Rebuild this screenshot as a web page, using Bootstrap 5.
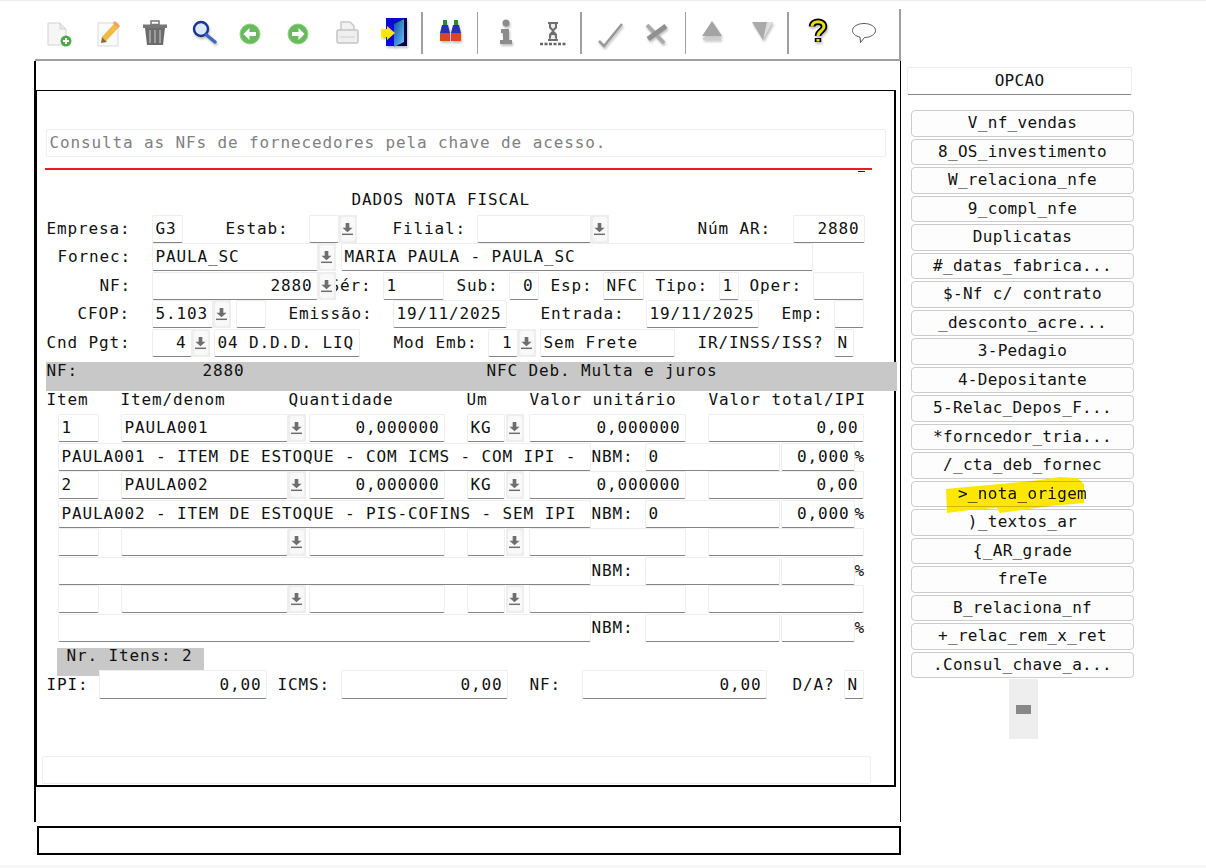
<!DOCTYPE html>
<html lang="pt-BR">
<head>
    <meta charset="UTF-8">
    <meta name="viewport" content="width=device-width, initial-scale=1.0">
    <title>Dados Nota Fiscal</title>
    <link href="https://cdn.jsdelivr.net/npm/bootstrap@5.3.0/dist/css/bootstrap.min.css" rel="stylesheet">
    <style>
        html, body { height: 868px; overflow: hidden; }
        body { background: #fff; border-top: 1px solid #eee; color: #111; font-family: "DejaVu Sans Mono", "Liberation Mono", monospace; font-size: 16px; letter-spacing: .87px; }

        /* toolbar */
        .main-col { width: 867px; margin-left: 34px; flex: none; }
        .tool-bar { height: 52px; width: 866px; margin: 8px 0 0 1px; border-right: 2px solid #a0a0a0; border-bottom: 2px solid #a0a0a0; }
        .tb-ic { width: 32px; height: 50px; flex: none; filter: blur(.6px); }
        .tb-ic.shd { filter: blur(.7px) drop-shadow(1px 2px 1px #8888); }
        .tb-sep { width: 1px; height: 42px; margin-top: 3px; background: #a0a0a0; flex: none; }
        .tb-sep.thick { width: 2px; }

        /* frames */
        .outer-box { height: 761px; padding-top: 29px; border-left: 2px solid #000; border-right: 1.5px solid #000; }
        .form-frame { width: 860px; height: 697px; padding: 0 0 0 8.5px; border: solid #000; border-width: 1px 2px 2px 1.5px; }
        .cmd-box { width: 864px; height: 29px; margin: 4px 0 0 3px; border: 2px solid #000; }
        .foot-band { height: 3px; margin-top: 10px; background: #f6f6f6; }

        /* form */
        .msg-field { width: 840px; height: 28px; margin-top: 38px; padding-left: 3px; line-height: 26px; color: #808080; border: 1px solid #eee; border-radius: 2px; }
        .red-line { width: 827px; height: 2px; margin: 11px 0 0 -1px; background: #ed1c24; }
        .tiny-dash { width: 7px; height: 1px; margin: 1px 0 0 812px; background: #222; }
        .form-title { height: 28.5px; margin-top: 14px; padding-left: 306px; line-height: 28px; }
        .f-row { height: 28.5px; display: flex; white-space: nowrap; }
        .lb { flex: none; height: 28px; line-height: 28px; white-space: pre; }
        .fd { flex: none; height: 28px; padding: 0 3px; line-height: 26px; background: #fff; border: 1px solid #eee; border-bottom-color: #858585; border-radius: 2px; overflow: hidden; }
        .fd.num { text-align: right; padding-right: 4px; }
        .dd { position: relative; z-index: 1; flex: none; width: 18px; height: 28px; padding: 2px; background: #eee; }
        .dd span { display: flex; align-items: center; justify-content: center; height: 24px; background: #f9f9f9; border-radius: 3px; }
        .dd svg { width: 11px; height: 14px; fill: #6e6e6e; }
        .gray-band { width: 851px; height: 29px; margin-top: 5px; background: #c8c8c8; line-height: 18px; display: flex; white-space: pre; }
        .hdr-row { height: 23px; display: flex; line-height: 17px; }
        .nr-band { position: relative; width: 147px; height: 22px; margin: 6px 0 0 11px; padding-left: 10px; line-height: 16px; background: #c8c8c8; }
        .nr-band::after { content: ""; position: absolute; top: 22px; left: 0; width: 42px; height: 6px; background: #c8c8c8; }
        .totals .lb { height: 29px; line-height: 29px; }
        .totals .fd { height: 29px; line-height: 27px; }
        .status-field { width: 829px; height: 28px; margin: 57px 0 0 -4px; border: 1px solid #eee; border-radius: 2px; }

        /* side */
        .side-col { margin: 66px 0 0 6px; width: 229px; flex: none; letter-spacing: .3px; }
        .opc-head { width: 225px; height: 28px; margin-bottom: 15px; line-height: 26px; text-align: center; border: 1px solid #eee; border-bottom-color: #858585; border-radius: 2px; }
        .opc-list { width: 223px; margin-left: 4px; display: grid; gap: 2px; }
        .opc-btn { position: relative; height: 26.5px; padding: 0; font: inherit; letter-spacing: inherit; line-height: 24px; color: #111; background: #fdfdfd; border: 1px solid #ccc; border-radius: 4px; }
        .opc-btn.marked { z-index: 2; }
        .hl-mark { position: absolute; left: 33px; top: -6px; width: 140px; height: 37px; fill: #ffe800; mix-blend-mode: multiply; }
        .scroll-stub { width: 29px; height: 60px; margin: 1px 0 0 102px; padding: 26px 7px 0; background: #eee; }
        .scroll-stub div { height: 9px; background: #888; }

        .w18{width:18px}.w20{width:20px}.w30{width:30px}.w31{width:31px}.w38{width:38px}.w40{width:40px}.w41{width:41px}.w51{width:51px}.w53{width:53px}.w54{width:54px}.w61{width:61px}.w63{width:63px}.w64{width:64px}.w65{width:65px}.w72{width:72px}.w74{width:74px}.w75{width:75px}.w77{width:77px}.w106{width:106px}.w113{width:113px}.w114{width:114px}.w120{width:120px}.w126{width:126px}.w127{width:127px}.w128{width:128px}.w135{width:135px}.w136{width:136px}.w139{width:139px}.w146{width:146px}.w156{width:156px}.w157{width:157px}.w159{width:159px}.w166{width:166px}.w167{width:167px}.w168{width:168px}.w178{width:178px}.w179{width:179px}.w184{width:184px}.w185{width:185px}.w284{width:284px}.w472{width:472px}.w533{width:533px}
        .pl1{padding-left:1px}.pl11{padding-left:11px}.pl12{padding-left:12px}.pl13{padding-left:13px}.pl22{padding-left:22px}.pl23{padding-left:23px}.pl26{padding-left:26px}.pl32{padding-left:32px}.pl34{padding-left:34px}.pl36{padding-left:36px}.pl43{padding-left:43px}.pl54{padding-left:54px}.pl89{padding-left:89px}
        .ml1{margin-left:1px}.ml3{margin-left:3px}.ml4{margin-left:4px}.ml5{margin-left:5px}.ml7{margin-left:7px}.ml9{margin-left:9px}.ml10{margin-left:10px}.ml11{margin-left:11px}.ml12{margin-left:12px}.ml13{margin-left:13px}.ml14{margin-left:14px}.ml15{margin-left:15px}.ml16{margin-left:16px}.ml17{margin-left:17px}.ml18{margin-left:18px}.ml22{margin-left:22px}.mln6{margin-left:-6px}
    </style>
</head>
<body>
    <svg width="0" height="0" class="position-absolute">
        <symbol id="dd-arrow" viewBox="0 0 12 15"><path d="M4 1h4v5h3.5L6 11 .5 6H4z"/><rect x="0" y="12.5" width="12" height="1.6"/></symbol>
    </svg>

    <div class="d-flex">
        <div class="main-col">
            <!-- barra de ferramentas -->
            <div class="tool-bar d-flex">
                <svg class="tb-ic ml7" viewBox="0 0 32 50"><path d="M6 14h12l6 6v16H6z" fill="#f6f6f6" stroke="#d2d2d2"/><path d="M18 14v6h6" fill="#e8e8e8" stroke="#d2d2d2"/><circle cx="24" cy="32" r="5.5" fill="#4fa84a"/><path d="M24 29v6M21 32h6" stroke="#fff" stroke-width="2"/></svg>
                <svg class="tb-ic ml18" viewBox="0 0 32 50"><rect x="6" y="14" width="20" height="23" fill="#fafafa" stroke="#dadada"/><path d="M12 30 25 16" stroke="#f2bb45" stroke-width="6"/><path d="M22 13l5 5" stroke="#f0a060" stroke-width="3"/><path d="M9 34l1-6 5 5z" fill="#8a6a3a"/></svg>
                <svg class="tb-ic ml15" viewBox="0 0 32 50"><rect x="12" y="12" width="8" height="3.5" fill="none" stroke="#777" stroke-width="1.5"/><rect x="4" y="15.5" width="24" height="3.5" fill="#777"/><path d="M6 19h20l-2 17H8z" fill="#6c6c6c"/><path d="M11 21v13M16 21v13M21 21v13" stroke="#aaa" stroke-width="1.6"/></svg>
                <svg class="tb-ic shd ml17" viewBox="0 0 32 50"><circle cx="13" cy="20" r="7" fill="#dce8fc" stroke="#1a3590" stroke-width="2.4"/><path d="M18.500 26 27 33" stroke="#3f68c4" stroke-width="3.500" stroke-linecap="round"/></svg>
                <svg class="tb-ic ml14" viewBox="0 0 32 50"><circle cx="16" cy="25" r="10" fill="#68bb5c" stroke="#8fd080"/><path d="M9.500 25l6-6v4h6.500v4H15.500v4z" fill="#fff"/></svg>
                <svg class="tb-ic ml16" viewBox="0 0 32 50"><circle cx="16" cy="25" r="10" fill="#68bb5c" stroke="#8fd080"/><path d="M22.500 25l-6-6v4H10v4h6.500v4z" fill="#fff"/></svg>
                <svg class="tb-ic ml17" viewBox="0 0 32 50"><path d="M10 21v-8h9l4 4v4" fill="#f2f2f2" stroke="#c8c8c8" stroke-width="1.500"/><rect x="6" y="21" width="21" height="13" rx="1.500" fill="#efefef" stroke="#c4c4c4" stroke-width="1.500"/><path d="M9 28h15" stroke="#ccc"/></svg>
                <svg class="tb-ic shd ml16" viewBox="0 0 32 50"><defs><linearGradient id="door" x1="0" y1="0" x2="1" y2="1"><stop offset="0" stop-color="#0c4fb0"/><stop offset="1" stop-color="#6fc4f2"/></linearGradient></defs><rect x="7" y="9" width="21" height="28" fill="#060640"/><path d="M7 9h18l-10 6v22H7z" fill="#0a0ad8"/><path d="M15 15l10-5v23l-10 5z" fill="url(#door)"/><path d="M2 20h6v-3l8 7-8 7v-3H2z" fill="#ffe600"/></svg>
                <div class="tb-sep thick ml10"></div>
                <svg class="tb-ic shd ml11" viewBox="0 0 32 50"><path d="M9 11h4v5H9zM20 11h4v5h-4z" fill="#2a8a3a"/><path d="M8 16h6l2 8H6zM19 16h6l2 8H17z" fill="#2630b0"/><path d="M6 24h10v8H6zM17 24h10v8H17z" fill="#d8481c"/></svg>
                <div class="tb-sep ml11"></div>
                <svg class="tb-ic shd ml12" viewBox="0 0 32 50"><circle cx="16" cy="14" r="3.500" fill="#8c8c8c"/><path d="M11 20h8v11h3v4H10v-4h3v-7h-2z" fill="#8c8c8c"/></svg>
                <svg class="tb-ic ml15" viewBox="0 0 32 50"><path d="M11 13h10v2h-1v4l-3 3 3 3v5h1v2H11v-2h1v-5l3-3-3-3v-4h-1z" fill="#707070"/><path d="M14 15h4v3l-2 2-2-2zM14.500 26h3l1 4h-5z" fill="#eee"/><path d="M3 35h26" stroke="#666" stroke-width="2.500" stroke-dasharray="3 1.500"/></svg>
                <div class="tb-sep thick ml11"></div>
                <svg class="tb-ic shd ml12" viewBox="0 0 32 50"><path d="M5 32l5 5L28 15" fill="none" stroke="#999" stroke-width="2.500"/></svg>
                <svg class="tb-ic shd ml14" viewBox="0 0 32 50"><path d="M7 16l17 18" stroke="#aaa" stroke-width="4"/><path d="M26 17 8 30" stroke="#909090" stroke-width="5"/></svg>
                <div class="tb-sep ml13"></div>
                <svg class="tb-ic shd ml10" viewBox="0 0 32 50"><path d="M16 12l10 15H6z" fill="#a4a4a4"/><path d="M7 29.500h18" stroke="#ccc" stroke-width="2.500"/></svg>
                <svg class="tb-ic shd ml18" viewBox="0 0 32 50"><path d="M6 13h21L17 31z" fill="#aaa"/><path d="M17 31l10-18h-6z" fill="#ddd"/></svg>
                <div class="tb-sep thick ml9"></div>
                <svg class="tb-ic shd ml13" viewBox="0 0 32 50"><path d="M10 17.500C10 11 22 11 22 17.500 22 22 16 22 16 27" fill="none" stroke="#000" stroke-width="6.500"/><path d="M16 29v4" stroke="#000" stroke-width="6.500"/><path d="M10 17.500C10 11 22 11 22 17.500 22 22 16 22 16 27" fill="none" stroke="#e8e000" stroke-width="3"/><path d="M16 30v2.500" stroke="#e8e000" stroke-width="3"/></svg>
                <svg class="tb-ic ml14" viewBox="0 0 32 50"><path d="M16 14.500c6.500 0 11.500 3.200 11.500 7s-5 7-11 7l-4 5-.5-5.500c-4.500-.8-7.500-3.400-7.500-6.500 0-3.800 5-7 11.500-7z" fill="#fff" stroke="#555"/></svg>
            </div>

            <div class="outer-box">
                <div class="form-frame">
                    <div class="msg-field">Consulta as NFs de fornecedores pela chave de acesso.</div>
                    <div class="red-line"></div>
                    <div class="tiny-dash"></div>
                    <div class="form-title">DADOS NOTA FISCAL</div>

                    <div class="f-row">
                        <span class="lb w106 pl1">Empresa:</span><div class="fd w31">G3</div>
                        <span class="lb w126 pl43">Estab:</span><div class="fd w30"></div>
                        <div class="dd"><span><svg><use href="#dd-arrow"/></svg></span></div>
                        <span class="lb w120 pl36">Filial:</span><div class="fd w114"></div>
                        <div class="dd"><span><svg><use href="#dd-arrow"/></svg></span></div>
                        <span class="lb w184 pl89">Núm AR:</span><div class="fd num w72">2880</div>
                    </div>
                    <div class="f-row">
                        <span class="lb w106 pl12">Fornec:</span><div class="fd w166">PAULA_SC</div>
                        <div class="dd"><span><svg><use href="#dd-arrow"/></svg></span></div>
                        <div class="fd w472 ml5">MARIA PAULA - PAULA_SC</div>
                    </div>
                    <div class="f-row">
                        <span class="lb w106 pl54">NF:</span><div class="fd num w166">2880</div>
                        <div class="dd"><span><svg><use href="#dd-arrow"/></svg></span></div>
                        <span class="lb w53 mln6">Sér:</span><div class="fd w61">1</div>
                        <span class="lb w65 pl13">Sub:</span><div class="fd num w30">0</div>
                        <span class="lb w64 pl12">Esp:</span><div class="fd w41">NFC</div>
                        <span class="lb w75 pl12">Tipo:</span><div class="fd w20">1</div>
                        <span class="lb w74 pl11">Oper:</span><div class="fd w51"></div>
                    </div>
                    <div class="f-row">
                        <span class="lb w106 pl32">CFOP:</span><div class="fd w61">5.103</div>
                        <div class="dd"><span><svg><use href="#dd-arrow"/></svg></span></div>
                        <div class="fd w30 ml5"></div>
                        <span class="lb w127 pl23">Emissão:</span><div class="fd w114">19/11/2025</div>
                        <span class="lb w139 pl34">Entrada:</span><div class="fd w113">19/11/2025</div>
                        <span class="lb w75 pl23">Emp:</span><div class="fd w30"></div>
                    </div>
                    <div class="f-row">
                        <span class="lb w106 pl1">Cnd Pgt:</span><div class="fd num w40">4</div>
                        <div class="dd"><span><svg><use href="#dd-arrow"/></svg></span></div>
                        <div class="fd w146 ml4">04 D.D.D. LIQ</div>
                        <span class="lb w128 pl34">Mod Emb:</span><div class="fd num w30">1</div>
                        <div class="dd"><span><svg><use href="#dd-arrow"/></svg></span></div>
                        <div class="fd w135 ml4">Sem Frete</div>
                        <span class="lb w159 pl23">IR/INSS/ISS?</span><div class="fd w20">N</div>
                    </div>

                    <div class="gray-band">
                        <span class="w157 pl1">NF:</span><span class="w284">2880</span><span>NFC Deb. Multa e juros</span>
                    </div>

                    <div class="hdr-row">
                        <span class="w75 pl1">Item</span><span class="w168">Item/denom</span><span class="w178">Quantidade</span><span class="w63">Um</span><span class="w179">Valor unitário</span><span>Valor total/IPI</span>
                    </div>

                    <!-- itens -->
                    <div class="f-row">
                        <div class="fd w41 ml12">1</div><div class="fd w167 ml22">PAULA001</div>
                        <div class="dd"><span><svg><use href="#dd-arrow"/></svg></span></div>
                        <div class="fd num w136 ml3">0,000000</div><div class="fd w38 ml22">KG</div>
                        <div class="dd ml1"><span><svg><use href="#dd-arrow"/></svg></span></div>
                        <div class="fd num w157 ml5">0,000000</div><div class="fd num w156 ml22">0,00</div>
                    </div>
                    <div class="f-row">
                        <div class="fd w533 ml12">PAULA001 - ITEM DE ESTOQUE - COM ICMS - COM IPI -</div>
                        <span class="lb w54 pl1">NBM:</span><div class="fd w135">0</div><div class="fd num w74 ml1">0,000</div><span class="lb">%</span>
                    </div>
                    <div class="f-row">
                        <div class="fd w41 ml12">2</div><div class="fd w167 ml22">PAULA002</div>
                        <div class="dd"><span><svg><use href="#dd-arrow"/></svg></span></div>
                        <div class="fd num w136 ml3">0,000000</div><div class="fd w38 ml22">KG</div>
                        <div class="dd ml1"><span><svg><use href="#dd-arrow"/></svg></span></div>
                        <div class="fd num w157 ml5">0,000000</div><div class="fd num w156 ml22">0,00</div>
                    </div>
                    <div class="f-row">
                        <div class="fd w533 ml12">PAULA002 - ITEM DE ESTOQUE - PIS-COFINS - SEM IPI</div>
                        <span class="lb w54 pl1">NBM:</span><div class="fd w135">0</div><div class="fd num w74 ml1">0,000</div><span class="lb">%</span>
                    </div>
                    <div class="f-row">
                        <div class="fd w41 ml12"></div><div class="fd w167 ml22"></div>
                        <div class="dd"><span><svg><use href="#dd-arrow"/></svg></span></div>
                        <div class="fd w136 ml3"></div><div class="fd w38 ml22"></div>
                        <div class="dd ml1"><span><svg><use href="#dd-arrow"/></svg></span></div>
                        <div class="fd w157 ml5"></div><div class="fd w156 ml22"></div>
                    </div>
                    <div class="f-row">
                        <div class="fd w533 ml12"></div>
                        <span class="lb w54 pl1">NBM:</span><div class="fd w135"></div><div class="fd w74 ml1"></div><span class="lb">%</span>
                    </div>
                    <div class="f-row">
                        <div class="fd w41 ml12"></div><div class="fd w167 ml22"></div>
                        <div class="dd"><span><svg><use href="#dd-arrow"/></svg></span></div>
                        <div class="fd w136 ml3"></div><div class="fd w38 ml22"></div>
                        <div class="dd ml1"><span><svg><use href="#dd-arrow"/></svg></span></div>
                        <div class="fd w157 ml5"></div><div class="fd w156 ml22"></div>
                    </div>
                    <div class="f-row">
                        <div class="fd w533 ml12"></div>
                        <span class="lb w54 pl1">NBM:</span><div class="fd w135"></div><div class="fd w74 ml1"></div><span class="lb">%</span>
                    </div>

                    <div class="nr-band">Nr. Itens: 2</div>
                    <div class="f-row totals position-relative">
                        <span class="lb w53 pl1">IPI:</span><div class="fd num w168">0,00</div>
                        <span class="lb w74 pl11">ICMS:</span><div class="fd num w167">0,00</div>
                        <span class="lb w74 pl22">NF:</span><div class="fd num w185">0,00</div>
                        <span class="lb w77 pl26">D/A?</span><div class="fd w20">N</div>
                    </div>
                    <div class="status-field"></div>
                </div>
            </div>
            <div class="cmd-box"></div>
        </div>

        <!-- opcoes -->
        <div class="side-col">
            <div class="opc-head">OPCAO</div>
            <div class="opc-list">
                <button type="button" class="btn opc-btn">V_nf_vendas</button>
                <button type="button" class="btn opc-btn">8_OS_investimento</button>
                <button type="button" class="btn opc-btn">W_relaciona_nfe</button>
                <button type="button" class="btn opc-btn">9_compl_nfe</button>
                <button type="button" class="btn opc-btn">Duplicatas</button>
                <button type="button" class="btn opc-btn">#_datas_fabrica...</button>
                <button type="button" class="btn opc-btn">$-Nf c/ contrato</button>
                <button type="button" class="btn opc-btn">_desconto_acre...</button>
                <button type="button" class="btn opc-btn">3-Pedagio</button>
                <button type="button" class="btn opc-btn">4-Depositante</button>
                <button type="button" class="btn opc-btn">5-Relac_Depos_F...</button>
                <button type="button" class="btn opc-btn">*forncedor_tria...</button>
                <button type="button" class="btn opc-btn">/_cta_deb_fornec</button>
                <button type="button" class="btn opc-btn marked">&gt;_nota_origem
                    <svg class="hl-mark" viewBox="0 0 140 37"><path d="M1 13 22 11 55 8 95 4 115 1 132 2 139 8V27L105 30 55 37 52 32 25 34 2 37z"/></svg>
                </button>
                <button type="button" class="btn opc-btn">)_textos_ar</button>
                <button type="button" class="btn opc-btn">{_AR_grade</button>
                <button type="button" class="btn opc-btn">freTe</button>
                <button type="button" class="btn opc-btn">B_relaciona_nf</button>
                <button type="button" class="btn opc-btn">+_relac_rem_x_ret</button>
                <button type="button" class="btn opc-btn">.Consul_chave_a...</button>
            </div>
            <div class="scroll-stub"><div></div></div>
        </div>
    </div>
    <div class="foot-band"></div>

    <script src="https://cdn.jsdelivr.net/npm/bootstrap@5.3.0/dist/js/bootstrap.bundle.min.js"></script>
</body>
</html>
